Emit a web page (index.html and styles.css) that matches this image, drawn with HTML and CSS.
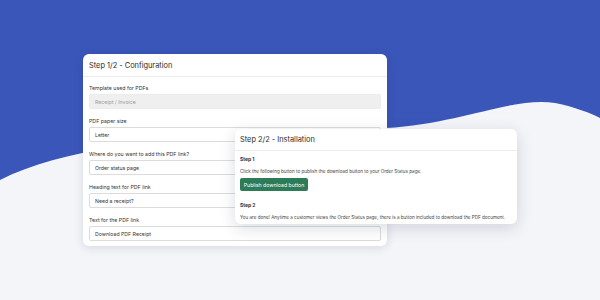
FILE: index.html
```html
<!DOCTYPE html>
<html>
<head>
<meta charset="utf-8">
<link rel="stylesheet" href="styles.css">
</head>
<body>
<div class="stage">
  <svg class="wave" width="600" height="300" viewBox="0 0 600 300">
    <path d="M0 180 C 90 135, 250 134, 386 128 C 460 124, 515 96, 555 103 C 575 107, 590 113, 600 118 L600 300 L0 300 Z" fill="#f4f5f9"/>
  </svg>

  <section class="card config">
    <header class="card-head">Step 1/2 - Configuration</header>
    <div class="card-body">
      <div class="field">
        <label class="label">Template used for PDFs</label>
        <div class="input disabled">Receipt / Invoice</div>
      </div>
      <div class="field">
        <label class="label">PDF paper size</label>
        <div class="input">Letter</div>
      </div>
      <div class="field">
        <label class="label">Where do you want to add this PDF link?</label>
        <div class="input">Order status page</div>
      </div>
      <div class="field">
        <label class="label">Heading text for PDF link</label>
        <div class="input">Need a receipt?</div>
      </div>
      <div class="field">
        <label class="label">Text for the PDF link</label>
        <div class="input">Download PDF Receipt</div>
      </div>
    </div>
  </section>

  <section class="card install">
    <header class="card-head">Step 2/2 - Installation</header>
    <div class="card-body install-body">
      <div class="step-title">Step 1</div>
      <p class="step-text">Click the following button to publish the download button to your Order Status page.</p>
      <button class="btn">Publish download button</button>
      <div class="step-title step2">Step 2</div>
      <p class="step-text">You are done! Anytime a customer views the Order Status page, there is a button included to download the PDF document.</p>
    </div>
  </section>
</div>
</body>
</html>
```

FILE: styles.css
```css
* { box-sizing: border-box; }
html, body {
  margin: 0;
  padding: 0;
}
body {
  width: 600px;
  height: 300px;
  overflow: hidden;
  font-family: Inter, "Noto Sans", sans-serif;
  color: #303030;
}
.stage {
  position: relative;
  width: 600px;
  height: 300px;
  background: #3a56b9;
  overflow: hidden;
}
.wave {
  position: absolute;
  left: 0;
  top: 0;
}
.card {
  position: absolute;
  background: #fff;
  border-radius: 6px;
  box-shadow: 0 2px 10px rgba(20, 30, 60, 0.13);
}
.config {
  left: 83px;
  top: 54px;
  width: 304px;
}
.install {
  left: 235px;
  top: 129px;
  width: 282px;
  height: 95px;
  box-shadow: 0 4px 16px rgba(20, 30, 60, 0.16);
}
.card-head {
  height: 23px;
  display: flex;
  align-items: center;
  padding: 0 6px;
  font-size: 7.4px;
  font-weight: 400;
  color: #2b2b2b;
  border-bottom: 1px solid #ececec;
}
.install .card-head {
  height: 22px;
  padding: 0 5px;
}
.card-body {
  padding: 7px 6px 5px;
  display: flex;
  flex-direction: column;
  gap: 8px;
}
.field {
  display: flex;
  flex-direction: column;
  gap: 2px;
}
.label {
  height: 8px;
  line-height: 8px;
  font-size: 5.25px;
  color: #333;
}
.input {
  height: 15px;
  border: 1px solid #dcdcdc;
  border-radius: 2px;
  padding: 0 5px;
  display: flex;
  align-items: center;
  font-size: 5.2px;
  color: #333;
}
.input.disabled {
  background: #efefef;
  border-color: #ececec;
  color: #9b9b9b;
}
.install-body {
  padding: 5px 5px 0;
  gap: 0;
  align-items: flex-start;
}
.step-title {
  font-size: 5px;
  font-weight: 700;
  color: #333;
  line-height: 7px;
}
.step2 {
  margin-top: 11px;
}
.step-text {
  margin: 5px 0 0;
  font-size: 4.58px;
  line-height: 7px;
  color: #444;
  white-space: nowrap;
}
.btn {
  margin-top: 3px;
  width: 68px;
  height: 13px;
  border: none;
  border-radius: 2px;
  background: #2d7b57;
  color: #fff;
  font-family: Inter, "Noto Sans", sans-serif;
  font-size: 5.2px;
  padding: 0;
}
```
